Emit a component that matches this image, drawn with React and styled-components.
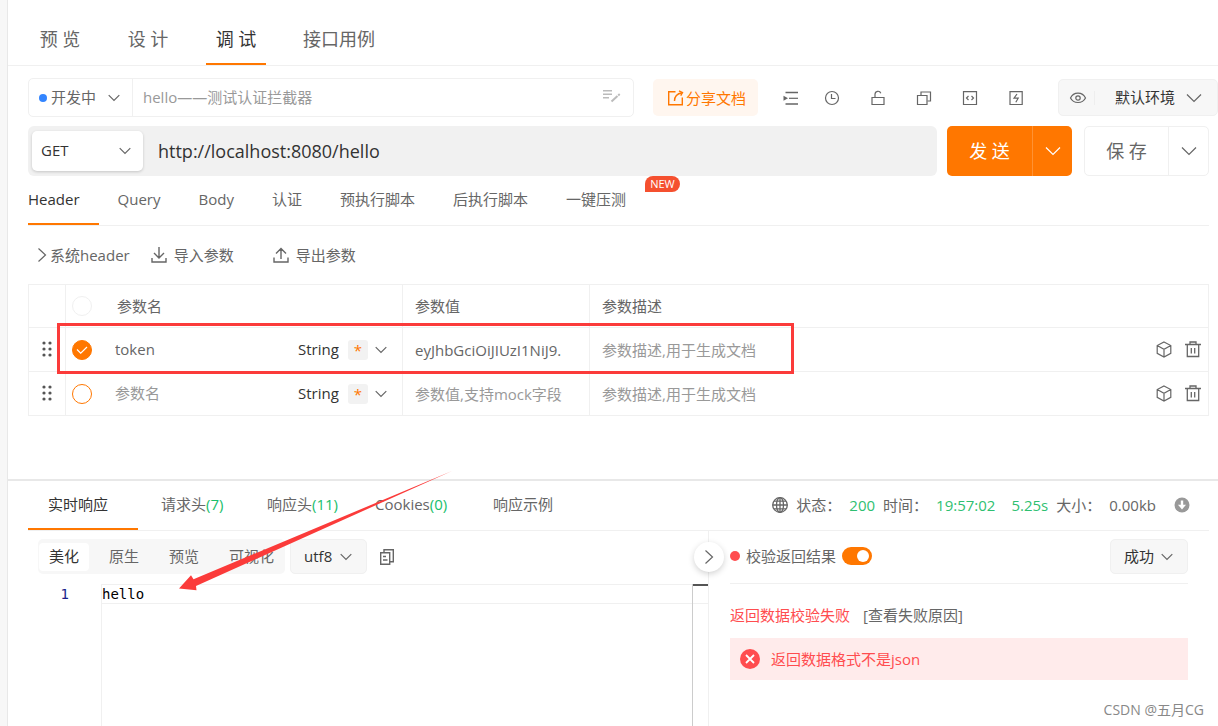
import React, { useState } from "react";
import styled, { createGlobalStyle, css } from "styled-components";

const GlobalStyle = createGlobalStyle`
  *, *::before, *::after { box-sizing: border-box; }
  body {
    margin: 0;
    background: #fff;
    color: #666;
    font: 15px/22px "Open Sans", "Noto Sans CJK SC", sans-serif;
  }
  button, input, select {
    font: inherit;
    color: inherit;
    margin: 0;
    padding: 0;
    border: 0;
    background: none;
    outline: none;
  }
  button, select { cursor: pointer; }
  input::placeholder { color: #999; opacity: 1; }
  svg { display: block; flex: none; }
`;

const line = "#f0f0f0";
const orange = "#ff7700";
const red = "#fb3b3a";

/* ---------- icons ---------- */

const Svg = ({ w = 16, h = w, box, children, ...rest }) => (
  <svg
    width={w}
    height={h}
    viewBox={box || `0 0 ${w} ${h}`}
    fill="none"
    stroke="currentColor"
    strokeWidth="1.2"
    aria-hidden="true"
    {...rest}
  >
    {children}
  </svg>
);

const Chevron = ({ size = 12 }) =>
  size > 12 ? (
    <Svg w={16} h={10}><path d="M1 1.5l7 7 7-7" /></Svg>
  ) : (
    <Svg w={12} h={8}><path d="M.7 1.2L6 6.5l5.300-5.300" /></Svg>
  );
const ChevronRight = () => <Svg w={10} h={16}><path d="M1.500 1.500L8.500 8l-7 6.500" /></Svg>;
const EditLines = () => (
  <Svg w={18} h={18} strokeWidth="1.500">
    <path d="M0 1.800h9M0 5.300h9M0 8.800h6" />
    <path d="M8.500 12.500l6-5.500" strokeWidth="2" />
    <path d="M15.200 6.400l1.500-1.300" strokeWidth="2" />
  </Svg>
);
const Share = () => (
  <Svg w={17} h={16} strokeWidth="1.400">
    <path d="M8.500 1.700H1.700v13h13.600V7.500" />
    <path d="M7.500 11c0-4 2.500-7.500 7.500-8.300" />
    <path d="M12 .8l3.500 1.700-1.800 3.200" />
  </Svg>
);
const Indent = () => (
  <Svg>
    <path d="M2.500 2.500H15M2.500 14H15" strokeWidth="1.400" />
    <path d="M6 8.300h9" />
    <path d="M.5 5.800v5l4.500-2.500z" fill="currentColor" stroke="none" />
  </Svg>
);
const Clock = () => (
  <Svg><circle cx="8" cy="8" r="6.500" /><path d="M7.500 4v4.500h4" /></Svg>
);
const Lock = () => (
  <Svg><path d="M2 7.500h12v7H2z" /><path d="M5 7.500V4.200a3 3 0 0 1 5.800-1" /></Svg>
);
const Layers = () => (
  <Svg><path d="M1.500 5.500h9.500v9H1.500z" /><path d="M5 5V2h9.500v9H11.500" /></Svg>
);
const CodeBox = () => (
  <Svg>
    <path d="M1.500 1.700h13v12.800h-13z" />
    <path d="M6.500 6L4.500 8l2 2M9.500 6l2 2-2 2" />
  </Svg>
);
const Bolt = () => (
  <Svg>
    <path d="M2 1.700h12.200v12.800H2z" />
    <path d="M9 4L6 8.200h4.200L7.800 12.200" />
  </Svg>
);
const Eye = () => (
  <Svg w={18} h={14}>
    <path d="M1.500 7C4.500.5 13.500.5 16.500 7 13.500 13 4.500 13 1.500 7z" />
    <circle cx="9" cy="7" r="2.200" />
  </Svg>
);
const Download = () => (
  <Svg w={16} h={16} strokeWidth="1.400">
    <path d="M8 0v11M3 6l5 5 5-5M1 11v4h14v-4" />
  </Svg>
);
const Upload = () => (
  <Svg w={16} h={16} strokeWidth="1.400">
    <path d="M8 12V1.500M3 6.500l5-5 5 5M1 10.500V15h14v-4.500" />
  </Svg>
);
const Cube = () => (
  <Svg w={16} h={17}>
    <path d="M8 1l6.800 3.500v7.800L8 16l-6.800-3.700V4.500zM1.200 4.500L8 8.200l6.800-3.700M8 8.200V16" />
  </Svg>
);
const Trash = () => (
  <Svg w={16} h={17} strokeWidth="1.300">
    <path d="M0 3.500h16M5 3V1h6v2M2.300 3.500v12h11.400v-12M6.300 7v5.500M9.700 7v5.500" />
  </Svg>
);
const Grip = () => (
  <Svg w={10} h={16} fill="#555" stroke="none">
    {[2, 8, 14].map((y) => (
      <g key={y}><circle cx="2" cy={y} r="1.600" /><circle cx="8" cy={y} r="1.600" /></g>
    ))}
  </Svg>
);
const Globe = () => (
  <Svg w={16} strokeWidth="1.300">
    <circle cx="8" cy="8" r="7.300" />
    <ellipse cx="8" cy="8" rx="3.500" ry="7.300" />
    <path d="M8 .7v14.600M.7 8h14.600M2 4.200h12M2 11.800h12" />
  </Svg>
);
const DownDisc = () => (
  <Svg w={16}>
    <circle cx="8" cy="8" r="7.500" fill="#999" stroke="none" />
    <path d="M8 3.500v6" stroke="#fff" strokeWidth="2.400" />
    <path d="M4 7.800h8L8 12.500z" fill="#fff" stroke="none" />
  </Svg>
);
const CopyDoc = () => (
  <Svg w={16} h={18} strokeWidth="1.400">
    <path d="M1.700 4.700h9v11.500h-9z" />
    <path d="M5 4.500V1.700h9.300v12H11M4 8.500h3M4 12h4.500" />
  </Svg>
);
const ErrorDisc = () => (
  <Svg w={20}>
    <circle cx="10" cy="10" r="10" fill="#ff4d4f" stroke="none" />
    <path d="M6 6l8 8M14 6l-8 8" stroke="#fff" strokeWidth="1.800" />
  </Svg>
);
const Tick = () => (
  <Svg w={12} h={8} stroke="#fff"><path d="M1 3.500l3.700 3.700L11 1" /></Svg>
);
const Arrow = () => (
  <Svg w={276} h={120} fill={red} stroke="none">
    <path d="M2 117.500L14 104.300l2.500 4L275 0 19 115l.5 4.200z" />
  </Svg>
);

/* ---------- page frame ---------- */

const Page = styled.div`
  display: flex;
  min-height: 100vh;
`;
const Rail = styled.aside`
  flex: none;
  width: 8px;
  background: #f7f7f7;
  border-right: 1px solid #e8e8e8;
`;
const Main = styled.main`
  flex: 1;
  min-width: 0;
  display: flex;
  flex-direction: column;
`;

const PageTabs = styled.nav`
  display: flex;
  gap: 28px;
  padding: 15px 22px 0;
  border-bottom: 1px solid ${line};
`;
const tabLine = css`
  border-bottom: 2px solid ${(p) => (p.$active ? orange : "transparent")};
  color: ${(p) => (p.$active ? "#333" : "#666")};
`;
const PageTab = styled.button`
  min-width: 60px;
  height: 50px;
  padding: 0 9px;
  font-size: 18px;
  ${tabLine}
`;

const Request = styled.section`
  padding: 12px 0 63px 20px;
`;

/* ---------- selects ---------- */

const SelectBox = styled.label`
  display: grid;
  flex: none;
  align-items: center;
  width: ${(p) => p.$width};
  height: ${(p) => p.$height || "35px"};
  color: ${(p) => p.$color || "#333"};
  border-radius: 5px;
  ${(p) => p.$filled && css`background: #f7f7f7; border: 1px solid ${line};`}
  ${(p) => p.$raised && css`background: #fff; box-shadow: 0 1px 3px rgba(0, 0, 0, 0.18);`}

  select, svg { grid-area: 1 / 1; }
  select {
    appearance: none;
    width: 100%;
    height: 100%;
    padding-left: ${(p) => p.$left || "0"};
    padding-bottom: 2px;
  }
  svg {
    justify-self: end;
    margin-right: ${(p) => p.$right || "0"};
    color: #666;
    pointer-events: none;
  }
`;
const Select = ({ label, options, large, ...box }) => (
  <SelectBox {...box}>
    <select aria-label={label}>
      {options.map((o) => <option key={o}>{o}</option>)}
    </select>
    <Chevron size={large ? 16 : 12} />
  </SelectBox>
);

/* ---------- request bars ---------- */

const InfoBar = styled.div`
  display: flex;
  align-items: center;
`;
const NameBox = styled.div`
  flex: 1;
  min-width: 0;
  display: flex;
  align-items: center;
  height: 39px;
  padding: 0 12px 0 10px;
  border: 1px solid ${line};
  border-radius: 5px;
  > svg { color: #bbb; }
`;
const StatusDot = styled.i`
  flex: none;
  width: ${(p) => p.$size};
  height: ${(p) => p.$size};
  border-radius: 50%;
  background: ${(p) => p.$color};
`;
const NameInput = styled.input`
  flex: 1;
  min-width: 0;
  height: 37px;
  margin-left: 12px;
  padding: 0 0 2px 10px;
  border-left: 1px solid ${line};
  color: #999;
`;
const ShareButton = styled.button`
  display: flex;
  align-items: center;
  gap: 2px;
  height: 37px;
  margin-left: 19px;
  padding: 0 12px 0 14px;
  border-radius: 5px;
  background: #fff6ef;
  color: ${orange};
`;
const Tools = styled.div`
  display: flex;
  margin: 0 19px 0 15px;
`;
const Tool = styled.button`
  display: grid;
  place-items: center;
  width: 46px;
  height: 37px;
  &:first-child { width: 36px; }
`;
const EnvBox = styled.div`
  display: flex;
  align-items: center;
  width: 160px;
  height: 37px;
  border: 1px solid ${line};
  border-radius: 5px;
  background: #f7f7f7;
`;
const EyeButton = styled.button`
  flex: none;
  width: 36px;
  padding-left: 10px;
  border-right: 1px solid #eee;
`;

const UrlRow = styled.div`
  display: flex;
  gap: 10px;
  padding: 9px 9px 0 0;
`;
const UrlBar = styled.div`
  flex: 1;
  min-width: 0;
  display: flex;
  align-items: center;
  height: 50px;
  padding: 0 4px;
  border-radius: 6px;
  background: #f1f1f1;
`;
const UrlInput = styled.input`
  flex: 1;
  min-width: 0;
  padding-left: 15px;
  font-size: 18px;
  line-height: 28px;
  color: #333;
`;
const SplitButton = styled.div`
  display: flex;
  width: 125px;
  height: 50px;
  overflow: hidden;
  border-radius: 5px;
  ${(p) => p.$primary
    ? css`background: ${orange}; color: #fff;`
    : css`border: 1px solid ${line}; margin-left: 2px;`}
`;
const SplitMain = styled.button`
  flex: 1;
  font-size: 18px;
  white-space: nowrap;
`;
const SplitMore = styled.button`
  display: grid;
  place-items: center;
  width: 40px;
  border-left: 1px solid ${(p) => (p.$primary ? "#ff9233" : line)};
`;

/* ---------- parameter tabs and table ---------- */

const SubTabs = styled.nav`
  display: flex;
  margin-right: 9px;
  border-bottom: 1px solid ${line};
`;
const SubTab = styled.button`
  position: relative;
  height: 49px;
  padding: 0 19px 2px;
  &:first-child { padding-left: 0; }
  ${tabLine}
`;
const NewBadge = styled.span`
  position: absolute;
  left: 100%;
  top: 0;
  width: 35px;
  border-radius: 8px 8px 8px 0;
  background: #f5502f;
  color: #fff;
  font-size: 11px;
  line-height: 16px;
`;
const Actions = styled.div`
  display: flex;
  padding: 18px 9px;
`;
const Action = styled.button`
  display: flex;
  align-items: center;
  gap: ${(p) => p.$gap};
  margin-right: ${(p) => p.$after || "0"};
`;
const TableWrap = styled.div`
  position: relative;
  margin-right: 9px;
`;
const Table = styled.table`
  width: 100%;
  table-layout: fixed;
  border-collapse: collapse;
  th, td {
    height: 44px;
    padding: 0 12px;
    border: 1px solid ${line};
    font-weight: 400;
    text-align: left;
  }
  th { height: 43px; }
  th:first-child, td:first-child { padding: 0 0 2px; }
  th:nth-child(2), td:nth-child(2) { padding: 0 15px 0 6px; }
  td:last-child { padding-right: 7px; }
`;
const Col = styled.col`
  width: ${(p) => p.$width || "auto"};
`;
const Handle = styled.button`
  display: grid;
  place-items: center;
  width: 100%;
`;
const Cell = styled.div`
  display: flex;
  align-items: center;
`;
const Check = styled.label`
  display: grid;
  place-items: center;
  flex: none;
  margin-right: ${(p) => (p.$muted ? "25px" : "23px")};
  input, svg { grid-area: 1 / 1; }
  input {
    appearance: none;
    width: 20px;
    height: 20px;
    border: 1px solid ${(p) => (p.$muted ? line : orange)};
    border-radius: 50%;
  }
  input:checked { background: ${orange}; }
  svg { z-index: 1; pointer-events: none; }
  input:not(:checked) + svg { visibility: hidden; }
`;
const Field = styled.input`
  flex: 1;
  width: 100%;
  min-width: 0;
`;
const NameField = styled(Field)`
  padding-bottom: 2px;
`;
const TypeCell = styled.div`
  display: flex;
  align-items: center;
`;
const TypeSelect = styled.select`
  appearance: none;
  padding-bottom: 2px;
  color: #333;
`;
const Required = styled.button`
  flex: none;
  width: 20px;
  height: 20px;
  margin: 0 7px 0 9px;
  border-radius: 3px;
  background: #f2f2f2;
  color: ${orange};
  line-height: 20px;
`;
const IconButton = styled.button`
  flex: none;
  margin-left: 13px;
`;
const Highlight = styled.div`
  position: absolute;
  left: 29px;
  top: 39px;
  width: 737px;
  height: 51px;
  border: 3px solid ${red};
  pointer-events: none;
`;

/* ---------- response ---------- */

const Response = styled.section`
  position: relative;
  flex: 1;
  display: flex;
  flex-direction: column;
  padding-left: 20px;
  border-top: 2px solid #e8e8e8;
`;
const ResponseBar = styled.div`
  display: flex;
  margin-right: 9px;
  border-bottom: 1px solid ${line};
`;
const ResponseTab = styled.button`
  width: ${(p) => p.$width};
  height: 49px;
  padding-bottom: 2px;
  text-align: left;
  white-space: nowrap;
  ${tabLine}
  &:first-child { padding-left: 20px; margin-right: 23px; }
`;
const Count = styled.span`
  color: #19be6b;
`;
const Status = styled.div`
  display: flex;
  align-items: center;
  gap: 8px;
  margin-left: auto;
  padding: 0 19px 2px 0;
  white-space: nowrap;
`;
const Good = styled.span`
  color: #2fbf71;
  & + & { margin-left: 8px; }
`;
const DownloadButton = styled.button`
  margin-left: 10px;
`;
const Columns = styled.div`
  flex: 1;
  display: flex;
`;
const Viewer = styled.div`
  flex: 1;
  min-width: 0;
  display: flex;
  flex-direction: column;
`;
const ViewerTools = styled.div`
  display: flex;
  align-items: center;
  gap: 5px;
  padding: 8px 10px 10px;
`;
const Segments = styled.div`
  display: flex;
  align-items: center;
  gap: 10px;
  height: 35px;
  padding: 0 1px;
  border-radius: 5px;
  background: #f7f7f7;
`;
const Segment = styled.button`
  height: 28px;
  padding: 0 10px 2px;
  border-radius: 4px;
  background: ${(p) => (p.$active ? "#fff" : "transparent")};
  color: ${(p) => (p.$active ? "#333" : "#666")};
`;
const CopyButton = styled.button`
  margin-left: 7px;
`;
const Editor = styled.div`
  flex: 1;
  display: flex;
  font: 14px/18px "DejaVu Sans Mono", monospace;
`;
const Gutter = styled.div`
  width: 73px;
  padding: 1px 32px 0 0;
  text-align: right;
  color: #1b1f8a;
`;
const Code = styled.div`
  flex: 1;
  border-left: 1px solid ${line};
  color: #000;
`;
const CodeLine = styled.div`
  border: solid ${line};
  border-width: 1px 0;
`;
const Ruler = styled.div`
  width: 16px;
  border-left: 1px solid #ccc;
  &::before {
    content: "";
    display: block;
    height: 20px;
    border-top: 2px solid #555;
    border-bottom: 1px solid ${line};
  }
`;
const ResultPanel = styled.aside`
  position: relative;
  flex: none;
  width: 510px;
  padding: 0 30px 0 21px;
  border-left: 1px solid ${line};
`;
const Collapse = styled.button`
  position: absolute;
  left: -15px;
  top: 11px;
  display: grid;
  place-items: center;
  width: 30px;
  height: 30px;
  border-radius: 50%;
  background: #fff;
  box-shadow: 0 2px 6px rgba(0, 0, 0, 0.18);
`;
const PanelHead = styled.div`
  display: flex;
  align-items: center;
  justify-content: space-between;
  padding: 8px 0 9px;
  border-bottom: 1px solid ${line};
`;
const ToggleLabel = styled.label`
  display: flex;
  align-items: center;
  gap: 6px;
  padding-bottom: 2px;
`;
const Toggle = styled.input`
  appearance: none;
  width: 30px;
  height: 18px;
  padding: 3px;
  border-radius: 9px;
  background: #ccc;
  &::before {
    content: "";
    display: block;
    width: 12px;
    height: 12px;
    border-radius: 50%;
    background: #fff;
  }
  &:checked { background: ${orange}; }
  &:checked::before { margin-left: auto; }
`;
const Failure = styled.p`
  display: flex;
  gap: 13px;
  margin: 0;
  padding: 20px 0 12px;
  color: #ff4d4f;
`;
const ReasonLink = styled.a`
  color: #666;
  text-decoration: none;
`;
const ErrorBox = styled.div`
  display: flex;
  align-items: center;
  gap: 11px;
  height: 42px;
  padding: 0 10px;
  background: #ffebeb;
  color: #ff4d4f;
`;
const Pointer = styled.div`
  position: absolute;
  left: 169px;
  top: -10px;
  pointer-events: none;
`;
const Watermark = styled.footer`
  position: absolute;
  right: 14px;
  bottom: 5px;
  font-size: 14px;
  color: #888;
`;

const rows = [
  { on: true, name: "token", value: "eyJhbGciOiJIUzI1NiJ9." },
  { on: false, name: "", value: "" },
];

function ParamRow({ row }) {
  const [on, setOn] = useState(row.on);
  return (
    <tr>
      <td><Handle aria-label="拖动排序"><Grip /></Handle></td>
      <td>
        <Cell>
          <Check>
            <input type="checkbox" aria-label="启用参数" checked={on} onChange={() => setOn(!on)} />
            <Tick />
          </Check>
          <NameField aria-label="参数名" placeholder="参数名" defaultValue={row.name} />
          <TypeCell>
            <TypeSelect aria-label="类型"><option>String</option></TypeSelect>
            <Required aria-label="必填">*</Required>
            <Chevron />
          </TypeCell>
        </Cell>
      </td>
      <td><Field aria-label="参数值" placeholder="参数值,支持mock字段" defaultValue={row.value} /></td>
      <td>
        <Cell>
          <Field aria-label="参数描述" placeholder="参数描述,用于生成文档" />
          <IconButton aria-label="模型"><Cube /></IconButton>
          <IconButton aria-label="删除"><Trash /></IconButton>
        </Cell>
      </td>
    </tr>
  );
}

export default function App() {
  const [check, setCheck] = useState(true);
  return (
    <Page>
      <GlobalStyle />
      <Rail />
      <Main>
        <PageTabs>
          {["预 览", "设 计", "调 试", "接口用例"].map((t) => (
            <PageTab key={t} $active={t === "调 试"}>{t}</PageTab>
          ))}
        </PageTabs>

        <Request>
          <InfoBar>
            <NameBox>
              <StatusDot $size="8px" $color="#3385ff" />
              <Select label="接口状态" options={["开发中"]} $width="73px" $left="4px" $color="#666" />
              <NameInput aria-label="接口名称" defaultValue="hello——测试认证拦截器" />
              <EditLines />
            </NameBox>
            <ShareButton><Share />分享文档</ShareButton>
            <Tools>
              <Tool aria-label="目录"><Indent /></Tool>
              <Tool aria-label="历史"><Clock /></Tool>
              <Tool aria-label="锁定"><Lock /></Tool>
              <Tool aria-label="复制"><Layers /></Tool>
              <Tool aria-label="生成代码"><CodeBox /></Tool>
              <Tool aria-label="快捷"><Bolt /></Tool>
            </Tools>
            <EnvBox>
              <EyeButton aria-label="查看环境"><Eye /></EyeButton>
              <Select label="环境" options={["默认环境"]} large $width="107px" $left="20px" />
            </EnvBox>
          </InfoBar>

          <UrlRow>
            <UrlBar>
              <Select label="请求方法" options={["GET"]} $raised $width="111px" $height="40px" $left="9px" $right="12px" />
              <UrlInput aria-label="请求地址" defaultValue="http://localhost:8080/hello" />
            </UrlBar>
            <SplitButton $primary>
              <SplitMain>发 送</SplitMain>
              <SplitMore $primary aria-label="更多发送"><Chevron size={16} /></SplitMore>
            </SplitButton>
            <SplitButton>
              <SplitMain>保 存</SplitMain>
              <SplitMore aria-label="更多保存"><Chevron size={16} /></SplitMore>
            </SplitButton>
          </UrlRow>

          <SubTabs>
            {["Header", "Query", "Body", "认证", "预执行脚本", "后执行脚本", "一键压测"].map((t) => (
              <SubTab key={t} $active={t === "Header"}>
                {t}
                {t === "一键压测" && <NewBadge>NEW</NewBadge>}
              </SubTab>
            ))}
          </SubTabs>

          <Actions>
            <Action $gap="3px" $after="21px"><ChevronRight />系统header</Action>
            <Action $gap="7px" $after="39px"><Download />导入参数</Action>
            <Action $gap="7px"><Upload />导出参数</Action>
          </Actions>

          <TableWrap>
            <Table>
              <colgroup>
                <Col $width="37px" />
                <Col $width="337px" />
                <Col $width="187px" />
                <Col />
              </colgroup>
              <thead>
                <tr>
                  <th />
                  <th>
                    <Cell>
                      <Check $muted><input type="checkbox" aria-label="全选" /><Tick /></Check>
                      参数名
                    </Cell>
                  </th>
                  <th>参数值</th>
                  <th>参数描述</th>
                </tr>
              </thead>
              <tbody>
                {rows.map((row, i) => <ParamRow key={i} row={row} />)}
              </tbody>
            </Table>
            <Highlight />
          </TableWrap>
        </Request>

        <Response>
          <ResponseBar>
            <ResponseTab $active $width="110px">实时响应</ResponseTab>
            <ResponseTab $width="106px">请求头<Count>(7)</Count></ResponseTab>
            <ResponseTab $width="108px">响应头<Count>(11)</Count></ResponseTab>
            <ResponseTab $width="118px">Cookies<Count>(0)</Count></ResponseTab>
            <ResponseTab>响应示例</ResponseTab>
            <Status>
              <Globe />
              <span>状态：</span><Good>200</Good>
              <span>时间：</span><Good>19:57:02</Good><Good>5.25s</Good>
              <span>大小：</span><span>0.00kb</span>
              <DownloadButton aria-label="下载响应"><DownDisc /></DownloadButton>
            </Status>
          </ResponseBar>

          <Columns>
            <Viewer>
              <ViewerTools>
                <Segments>
                  {["美化", "原生", "预览", "可视化"].map((t) => (
                    <Segment key={t} $active={t === "美化"}>{t}</Segment>
                  ))}
                </Segments>
                <Select label="编码" options={["utf8"]} $filled $width="77px" $left="13px" $right="14px" />
                <CopyButton aria-label="复制响应"><CopyDoc /></CopyButton>
              </ViewerTools>
              <Editor>
                <Gutter>1</Gutter>
                <Code><CodeLine>hello</CodeLine></Code>
                <Ruler />
              </Editor>
            </Viewer>

            <ResultPanel>
              <Collapse aria-label="收起"><ChevronRight /></Collapse>
              <PanelHead>
                <ToggleLabel>
                  <StatusDot $size="10px" $color="#ff4d4f" />
                  校验返回结果
                  <Toggle type="checkbox" checked={check} onChange={() => setCheck(!check)} />
                </ToggleLabel>
                <Select label="期望结果" options={["成功"]} $filled $width="78px" $left="13px" $right="14px" />
              </PanelHead>
              <Failure>
                返回数据校验失败
                <ReasonLink href="#reason">[查看失败原因]</ReasonLink>
              </Failure>
              <ErrorBox><ErrorDisc />返回数据格式不是json</ErrorBox>
            </ResultPanel>
          </Columns>
          <Pointer><Arrow /></Pointer>
          <Watermark>CSDN @五月CG</Watermark>
        </Response>
      </Main>
    </Page>
  );
}
